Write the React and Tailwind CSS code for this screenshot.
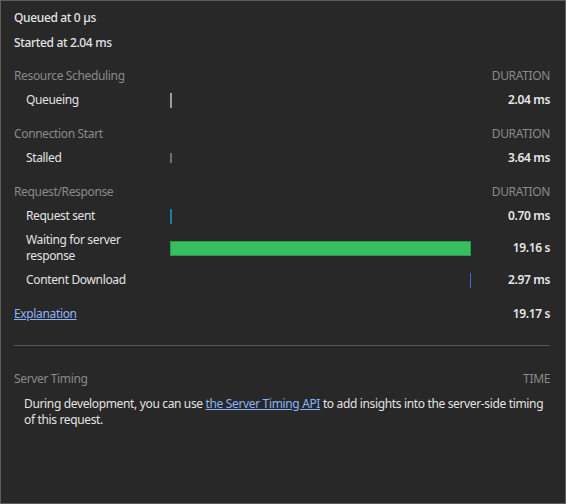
export default function App() {
  const font = { fontFamily: '"Noto Sans", "Open Sans", sans-serif' };
  const SectionHeader = ({ title, right = "DURATION" }) => (
    <div className="grid grid-cols-[457px_79px] h-6 items-center">
      <div className="text-[#8a8a8a]">{title}</div>
      <div className="text-right text-[#8a8a8a]">{right}</div>
    </div>
  );
  const Row = ({ label, value, children, tall }) => (
    <div className={`grid grid-cols-[156px_301px_79px] items-center ${tall ? "h-10" : "h-6"}`}>
      <div className="pl-3 leading-4 text-[#e3e3e3]">{label}</div>
      <div className="flex items-center h-full">{children}</div>
      <div className="text-right font-semibold text-[#e6e6e6]">{value}</div>
    </div>
  );
  return (
    <div
      style={font}
      className="w-[566px] h-[504px] bg-[#282828] border border-[#5c5c5c] pl-[13px] pr-[15px] pt-[5px] text-[12px] leading-4 tracking-[-0.35px] text-[#e3e3e3] overflow-hidden"
    >
      <div className="h-6 flex items-center font-medium">Queued at 0 µs</div>
      <div className="h-6 mt-px flex items-center font-medium">Started at 2.04 ms</div>
      <div className="mt-[9px]">
        <SectionHeader title="Resource Scheduling" />
        <Row label="Queueing" value="2.04 ms">
          <div className="w-[2px] h-[15px] bg-[#9c9c9c]" />
        </Row>
      </div>
      <div className="mt-[10px]">
        <SectionHeader title="Connection Start" />
        <Row label="Stalled" value="3.64 ms">
          <div className="w-[2px] h-[10px] bg-[#6e6e6e]" />
        </Row>
      </div>
      <div className="mt-[10px]">
        <SectionHeader title="Request/Response" />
        <Row label="Request sent" value="0.70 ms">
          <div className="w-[2px] h-[15px] bg-[#1480a2]" />
        </Row>
        <Row label={<span className="block w-[130px]">Waiting for server response</span>} value="19.16 s" tall>
          <div className="w-[301px] h-[15px] bg-[#36bf5e] border border-[#2a9a4a]" />
        </Row>
        <Row label="Content Download" value="2.97 ms">
          <div className="ml-[300px] w-[2px] h-[15px] bg-[#3b6fd4]" />
        </Row>
      </div>
      <div className="mt-[10px] grid grid-cols-[457px_79px] h-6 items-center">
        <a href="#" className="text-[#8ab4f8] underline">Explanation</a>
        <div className="text-right font-semibold text-[#e6e6e6]">19.17 s</div>
      </div>
      <div className="mt-[19px] h-px bg-[#555555]" />
      <div className="mt-[21px]">
        <SectionHeader title="Server Timing" right="TIME" />
        <p className="mt-[5px] pl-[10px] w-[532px] leading-4 text-[#e3e3e3]">
          During development, you can use{" "}
          <a href="#" className="text-[#8ab4f8] underline">the Server Timing API</a>{" "}
          to add insights into the server-side timing of this request.
        </p>
      </div>
    </div>
  );
}
